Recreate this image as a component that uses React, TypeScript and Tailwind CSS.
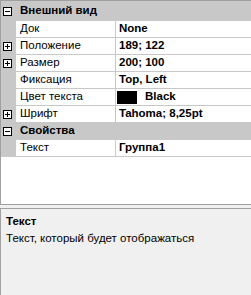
import { Fragment } from "react";

type Row = { name: string; value: string; expand?: boolean; swatch?: boolean };
type Category = { title: string; rows: Row[] };

const categories: Category[] = [
  {
    title: "Внешний вид",
    rows: [
      { name: "Док", value: "None" },
      { name: "Положение", value: "189; 122", expand: true },
      { name: "Размер", value: "200; 100", expand: true },
      { name: "Фиксация", value: "Top, Left" },
      { name: "Цвет текста", value: "Black", swatch: true },
      { name: "Шрифт", value: "Tahoma; 8,25pt", expand: true },
    ],
  },
  {
    title: "Свойства",
    rows: [{ name: "Текст", value: "Группа1" }],
  },
];

function Box({ minus }: { minus?: boolean }) {
  return (
    <svg width="9" height="9" viewBox="0 0 9 9" className="block">
      <rect x="0.5" y="0.5" width="8" height="8" fill="white" stroke="black" />
      <line x1="2" y1="4.5" x2="7" y2="4.5" stroke="black" />
      {!minus && <line x1="4.5" y1="2" x2="4.5" y2="7" stroke="black" />}
    </svg>
  );
}

export default function App() {
  return (
    <div
      className="w-[251px] h-[295px] overflow-hidden bg-[#f0f0f0] text-[11.5px] text-black flex flex-col"
      style={{ fontFamily: "Tahoma, 'Liberation Sans', sans-serif" }}
    >
      {/* Property grid */}
      <div className="h-[205px] border-t border-l border-b border-[#a0a0a0] bg-white flex flex-col">
        {categories.map((cat, ci) => (
          <Fragment key={cat.title}>
            <div
              className={`flex items-center bg-[#c8c8c8] border-b border-[#c8c8c8] ${
                ci === 0 ? "h-[20px]" : "h-[17px]"
              }`}
            >
              <div className="w-[15px] pl-[2px] pt-[1px] flex-shrink-0">
                <Box minus />
              </div>
              <span className="pl-[4px] font-bold">{cat.title}</span>
            </div>
            {cat.rows.map((row) => (
              <div key={row.name} className="flex h-[17px]">
                <div className="w-[15px] flex-shrink-0 bg-[#c8c8c8] flex items-center pl-[2px]">
                  {row.expand && <Box />}
                </div>
                <div className="w-[100px] flex-shrink-0 border-b border-r border-[#c8c8c8] pl-[4px] flex items-center">
                  {row.name}
                </div>
                <div
                  className={`flex-1 border-b border-[#c8c8c8] flex items-center font-bold ${
                    row.swatch ? "pl-[1px]" : "pl-[3px]"
                  }`}
                >
                  {row.swatch && <span className="w-[20px] h-[13px] bg-black mr-[8px]" />}
                  {row.value}
                </div>
              </div>
            ))}
          </Fragment>
        ))}
      </div>

      {/* Help panel */}
      <div className="mt-[3px] flex-1 border-t border-l border-[#a0a0a0] pl-[5px] pt-[5px]">
        <div className="font-bold leading-[14px]">Текст</div>
        <div className="mt-[3px] leading-[14px]">Текст, который будет отображаться</div>
      </div>
    </div>
  );
}
